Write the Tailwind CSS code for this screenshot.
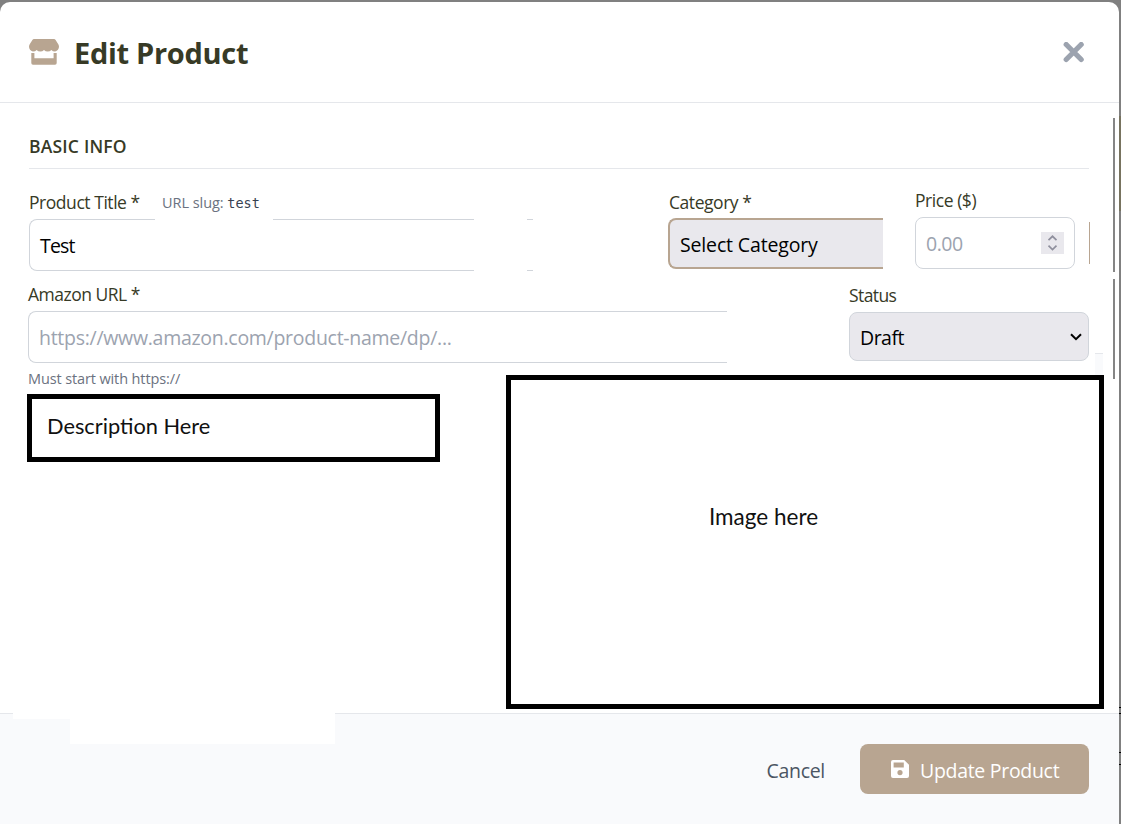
<!DOCTYPE html>
<html lang="en">
<head>
<meta charset="utf-8">
<title>Edit Product</title>
<script src="https://cdn.jsdelivr.net/npm/@tailwindcss/browser@4"></script>
</head>
<body class="relative h-[824px] w-[1121px] overflow-hidden bg-[#808080] pt-[2px] font-['Open_Sans','Noto_Sans',sans-serif] text-[#374151]">
<main class="relative flex h-[822px] w-[1119px] flex-col overflow-hidden rounded-t-[10px] bg-white">
  <header class="flex h-[101px] shrink-0 items-center border-b border-[#e5e7eb] pl-[29px] pr-[35px]">
    <svg class="-mt-px h-[26px] w-[30px] shrink-0" viewBox="0 0 30 26" fill="#b8a591">
      <path d="M5 0H25Q26 0 26.6 1L29.3 5.3C31 8.2 29.4 12 26.2 12.4Q23.8 12.5 22.4 10.9Q20.8 12.5 18.7 12.5Q16.5 12.5 15 10.9Q13.5 12.5 11.3 12.5Q9.2 12.5 7.6 10.9Q6.2 12.5 3.8 12.4C.6 12-1 8.2.7 5.3L3.4 1Q4 0 5 0Z"/>
      <path d="M2.3 13.9Q4 14.3 5.4 13.9V19.3H24.6V13.9Q26.2 14.3 27.7 13.9V24Q27.7 25.7 26 25.7H4Q2.3 25.7 2.3 24Z"/>
    </svg>
    <h1 class="ml-[15px] mt-px whitespace-nowrap text-[29px] font-bold leading-10 tracking-[-0.3px] text-[#373a26]">Edit Product</h1>
    <button class="ml-auto" aria-label="Close">
      <svg class="h-[21px] w-[21px]" viewBox="0 0 21 21" fill="none" stroke="#9ca3af" stroke-width="5.2" stroke-linecap="round"><path d="M3.2 2.5L18.2 17.5M18.2 2.5L3.2 17.5"/></svg>
    </button>
  </header>

  <section class="flex h-[610px] shrink-0 flex-col">
    <div class="ml-[29px] mt-[30px] flex h-[36px] w-[1060px] items-start border-b border-[#e5e7eb]">
      <h2 class="whitespace-nowrap text-[17.5px] font-semibold leading-[26px] tracking-[0.2px] text-[#373a26]">BASIC INFO</h2>
    </div>

    <div class="mt-[20px] flex h-[95px] items-start pl-[29px]">
      <div class="w-[639px]">
        <div class="flex h-[26px] items-center whitespace-nowrap">
          <label class="w-[133px] text-[17.5px] tracking-[-0.45px] text-[#373a26]">Product Title *</label>
          <span class="pt-[2px] text-[14.5px] tracking-[-0.05px] text-[#6b7280]">URL slug: <code class="font-['DejaVu_Sans_Mono',monospace] text-[13.5px] tracking-[0px] text-[#374151]">test</code></span>
        </div>
        <div class="relative mt-[4px] flex h-[52px]">
          <div class="flex w-[445px] items-center rounded-l-[8px] border-y border-l border-[#d1d5db] pl-[10px] pt-[2px] text-[19.5px] tracking-[-0.8px] text-black">Test</div>
          <span class="absolute left-[126px] top-0 h-px w-[118px] bg-white"></span>
          <span class="ml-[53px] w-[6px] border-y border-[#d1d5db]"></span>
        </div>
      </div>
      <div class="w-[247px]">
        <label class="flex h-[26px] items-center whitespace-nowrap pl-px text-[17.5px] tracking-[-0.45px] text-[#373a26]">Category *</label>
        <div class="mt-[3px] flex h-[51px] w-[215px] items-center whitespace-nowrap rounded-l-[8px] border-y-2 border-l-2 border-[#b8a591] bg-[#e9e8ed] pl-[10px] pt-[2px] text-[19.5px] tracking-[-0.15px] text-black">Select Category</div>
      </div>
      <div class="-mt-[2px] w-[160px]">
        <label class="flex h-[26px] items-center whitespace-nowrap text-[17.5px] tracking-[-0.45px] text-[#373a26]">Price ($)</label>
        <div class="mt-[4px] flex h-[52px] items-center justify-between rounded-[8px] border border-[#d1d5db] pl-[10px] pr-[10px] text-[19.5px] tracking-[-0.5px] text-[#9ca3af]">
          <span class="pt-[2px]">0.00</span>
          <svg class="h-[22px] w-[23px]" viewBox="0 0 23 22" fill="none" stroke="#8f8f9d" stroke-width="1.7"><path d="M0 0H23V22H0Z" fill="#e9e8ed" stroke="none"/><path d="M7.5 8.2L11.5 4.3L15.5 8.2M7.5 13.7L11.5 17.6L15.5 13.7"/></svg>
        </div>
      </div>
      <span class="ml-[14px] mt-[33px] h-[42px] w-px bg-[#b8a591]"></span>
    </div>

    <div class="flex h-[82px] items-start pl-[28px]">
      <div class="w-[821px]">
        <label class="-mt-[3px] flex h-[26px] items-center whitespace-nowrap text-[17.5px] tracking-[-0.5px] text-[#373a26]">Amazon URL *</label>
        <div class="mt-[4px] flex h-[52px] w-[699px] items-center whitespace-nowrap rounded-l-[8px] border-y border-l border-[#d1d5db] pl-[10px] pt-[2px] text-[19.5px] tracking-[-0.28px] text-[#9ca3af]">https://www.amazon.com/product-name/dp/...</div>
      </div>
      <div class="-mt-[2px] w-[240px]">
        <label class="flex h-[26px] items-center whitespace-nowrap text-[17.5px] tracking-[-0.6px] text-[#373a26]">Status</label>
        <div class="mt-[4px] flex h-[49px] items-center justify-between rounded-[8px] border border-[#d1d5db] bg-[#e9e8ed] pl-[10px] pr-[6px] text-[19.5px] tracking-[-0.5px] text-black">
          <span class="pt-[2px]">Draft</span>
          <svg class="h-[8px] w-[12px]" viewBox="0 0 12 8" fill="none" stroke="#000" stroke-width="2"><path d="M1 1.2L6 6.2L11 1.2"/></svg>
        </div>
      </div>
    </div>

    <div class="flex items-start pl-[27px]">
      <div class="w-[479px]">
        <p class="flex h-[24px] items-center whitespace-nowrap pl-px pt-[2px] text-[14.5px] tracking-[-0.12px] text-[#6b7280]">Must start with https://</p>
        <div class="mt-[4px] flex h-[68px] w-[413px] items-center whitespace-nowrap border-[5px] border-black pb-[3px] pl-[15px] font-['Lato',sans-serif] text-[21.8px] text-[#111]">Description Here</div>
      </div>
      <div class="mt-[9px] flex h-[334px] w-[598px] justify-center border-[5px] border-black pt-[122px] font-['Lato',sans-serif] text-[22.5px] leading-[30px] text-[#111]"><span class="-ml-[83px] whitespace-nowrap">Image here</span></div>
    </div>
  </section>

  <footer class="relative flex h-[111px] shrink-0 items-center justify-end border-t border-[#e5e7eb] bg-[#f9fafc] pr-[30px]">
    <span class="absolute -top-px left-[13px] h-[6px] w-[322px] bg-white"></span>
    <span class="absolute -top-px left-[70px] h-[31px] w-[265px] bg-white"></span>
    <button class="mr-[35px] whitespace-nowrap pt-[3px] text-[19.5px] tracking-[-0.3px] text-[#4b5563]">Cancel</button>
    <button class="flex h-[50px] w-[229px] items-center whitespace-nowrap rounded-[8px] bg-[#b8a591] pl-[31px] text-[19.5px] tracking-[-0.3px] text-white">
      <svg class="h-[18px] w-[18px]" viewBox="0 0 18 18" fill="#fff" fill-rule="evenodd"><path d="M2 0H13.2L18 4.8V16Q18 18 16 18H2Q0 18 0 16V2Q0 0 2 0ZM2.6 2.6V7.4H12.8V2.6ZM9 10A2.6 2.6 0 1 0 9 15.2A2.6 2.6 0 1 0 9 10Z"/></svg>
      <span class="ml-[11px] pt-[3px]">Update Product</span>
    </button>
  </footer>

  <span class="absolute left-[1095px] top-[351px] h-[22px] w-[8px] border-t border-[#e5e7eb] bg-[#f9fafc]"></span>
  <span class="absolute left-[1113px] top-[116px] h-[154px] w-[2px] bg-[#858585]"></span>
  <span class="absolute left-[1113px] top-[277px] h-[100px] w-[2px] bg-[#858585]"></span>
</main>
<span class="absolute left-[1119px] top-[116px] h-[95px] w-[2px] bg-[#77735f]"></span>
<span class="absolute left-[1119px] top-[707px] h-px w-[2px] bg-black"></span>
<span class="absolute left-[1119px] top-[713px] h-px w-[2px] bg-black"></span>
<span class="absolute left-[1119px] top-[752px] h-px w-[2px] bg-black"></span>
<span class="absolute left-[1119px] top-[764px] h-px w-[2px] bg-black"></span>
</body>
</html>
